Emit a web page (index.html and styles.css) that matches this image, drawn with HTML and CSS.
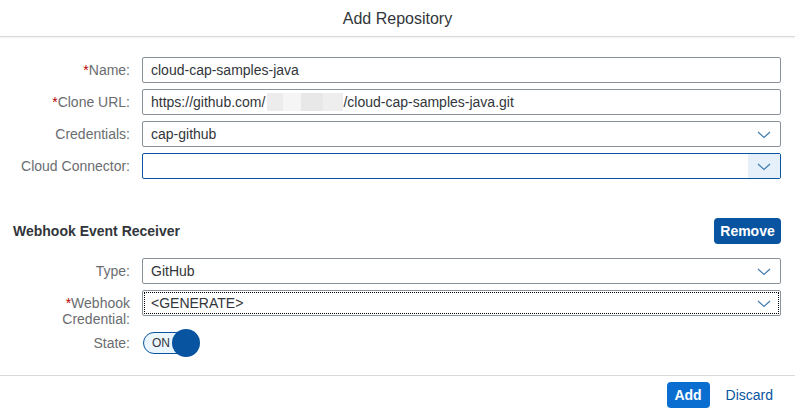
FILE: index.html
```html
<!DOCTYPE html>
<html>
<head>
<meta charset="utf-8">
<title>Add Repository</title>
<link rel="stylesheet" href="styles.css">
</head>
<body>
<div class="dialog">
  <header class="dlg-header">Add Repository</header>
  <main class="dlg-body">
    <div class="form">
      <div class="row">
        <label class="lbl"><span class="req">*</span>Name:</label>
        <div class="field"><span class="val">cloud-cap-samples-java</span></div>
      </div>
      <div class="row">
        <label class="lbl"><span class="req">*</span>Clone URL:</label>
        <div class="field"><span class="val">https://github.com/<span class="blur b1"></span><span class="blur b2"></span><span class="blur b3"></span><span class="blur b4"></span>/cloud-cap-samples-java.git</span></div>
      </div>
      <div class="row">
        <label class="lbl">Credentials:</label>
        <div class="field select"><span class="val">cap-github</span><span class="arrow"><svg width="14" height="8" viewBox="0 0 14 8"><path d="M1 1l6 5.5L13 1" fill="none" stroke="#427cac" stroke-width="1.2"/></svg></span></div>
      </div>
      <div class="row">
        <label class="lbl">Cloud Connector:</label>
        <div class="field select focused"><span class="val"></span><span class="arrow hl"><svg width="14" height="8" viewBox="0 0 14 8"><path d="M1 1l6 5.5L13 1" fill="none" stroke="#427cac" stroke-width="1.2"/></svg></span></div>
      </div>
    </div>

    <div class="section-head">
      <h2 class="section-title">Webhook Event Receiver</h2>
      <button class="btn btn-emph">Remove</button>
    </div>

    <div class="form">
      <div class="row">
        <label class="lbl">Type:</label>
        <div class="field select"><span class="val">GitHub</span><span class="arrow"><svg width="14" height="8" viewBox="0 0 14 8"><path d="M1 1l6 5.5L13 1" fill="none" stroke="#427cac" stroke-width="1.2"/></svg></span></div>
      </div>
      <div class="row">
        <label class="lbl"><span class="req">*</span>Webhook Credential:</label>
        <div class="field select dotted"><span class="val">&lt;GENERATE&gt;</span><span class="arrow"><svg width="14" height="8" viewBox="0 0 14 8"><path d="M1 1l6 5.5L13 1" fill="none" stroke="#427cac" stroke-width="1.2"/></svg></span></div>
      </div>
      <div class="row row-state">
        <label class="lbl">State:</label>
        <div class="switch"><span class="track">ON</span><span class="knob"></span></div>
      </div>
    </div>
  </main>
  <footer class="dlg-footer">
    <button class="btn btn-accept">Add</button>
    <button class="btn btn-link">Discard</button>
  </footer>
</div>
</body>
</html>
```

FILE: styles.css
```css
* { box-sizing: border-box; }
html, body { margin: 0; padding: 0; background: #fff; }
body {
  font-family: "Liberation Sans", Arial, sans-serif;
  font-size: 14px;
  color: #32363a;
  width: 795px;
  height: 412px;
  overflow: hidden;
}
.dialog { display: flex; flex-direction: column; height: 412px; }
.dlg-header {
  height: 37px;
  line-height: 37px;
  text-align: center;
  font-size: 16px;
  color: #32363a;
  border-bottom: 1px solid #d9d9d9;
  box-shadow: 0 1px 2px rgba(0,0,0,0.06);
}
.dlg-body { flex: 1; padding: 20px 14px 0 12px; }
.form { display: flex; flex-direction: column; gap: 6px; }
.row {
  display: grid;
  grid-template-columns: 118px 1fr;
  column-gap: 12px;
  align-items: start;
}
.lbl {
  text-align: right;
  color: #6a6d70;
  line-height: 16px;
  padding-top: 5px;
}
.req { color: #bb0000; }
.field {
  height: 26px;
  border: 1px solid #89919a;
  border-radius: 2px;
  background: #fff;
  display: flex;
  align-items: center;
  padding-left: 8px;
  color: #32363a;
}
.val { flex: 1; white-space: nowrap; display: flex; align-items: center; }
.blur { display: inline-block; height: 18px; }
.b1 { width: 16px; background: #ececec; margin-left: 2px; }
.b2 { width: 18px; background: #f5f5f5; }
.b3 { width: 22px; background: #e8e8e8; }
.b4 { width: 20px; background: #eeeeee; }
.arrow {
  width: 32px;
  height: 100%;
  display: flex;
  align-items: center;
  justify-content: center;
  padding-top: 2px;
}
.focused { border-color: #0854a0; }
.arrow.hl { background: #e5f0fa; }
.dotted { outline: 1px dotted #000; outline-offset: -3px; }
.section-head {
  display: flex;
  justify-content: space-between;
  align-items: center;
  margin-top: 39px;
  margin-bottom: 14px;
  padding-left: 1px;
}
.section-title { margin: 0; font-size: 14px; font-weight: bold; color: #32363a; }
.btn {
  font-family: inherit;
  font-size: 14px;
  border: none;
  cursor: pointer;
  height: 26px;
  border-radius: 4px;
}
.btn-emph { background: #0854a0; color: #fff; font-weight: bold; width: 67px; padding: 0; }
.row-state { margin-top: -3px; }
.switch { position: relative; width: 58px; height: 28px; margin-top: -1px; }
.track {
  position: absolute;
  left: 1px; top: 3px;
  width: 48px; height: 22px;
  border: 1px solid #0854a0;
  border-radius: 11px;
  background: #ebf5fe;
  font-size: 12px;
  color: #32363a;
  line-height: 20px;
  padding-left: 8px;
}
.knob {
  position: absolute;
  left: 30px; top: 0;
  width: 28px; height: 28px;
  border-radius: 50%;
  background: #0854a0;
}
.dlg-footer {
  height: 37px;
  border-top: 1px solid #d9d9d9;
  display: flex;
  justify-content: flex-end;
  align-items: center;
  gap: 8px;
  padding: 2px 14px 0 0;
}
.btn-accept { background: #0a6ed1; color: #fff; font-weight: bold; width: 43px; padding: 0; }
.btn-link { background: transparent; color: #0854a0; padding: 0 8px; }
```
